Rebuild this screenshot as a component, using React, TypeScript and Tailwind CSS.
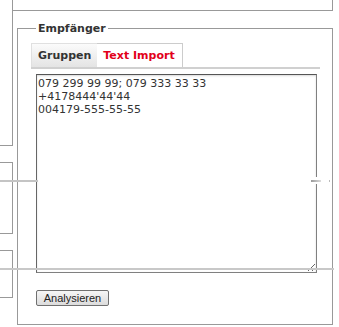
import React from "react";

export default function App() {
  return (
    <div className="relative w-[339px] h-[327px] bg-white overflow-hidden flex font-['DejaVu_Sans',sans-serif]">
      <div className="flex flex-col w-[13px] shrink-0">
        <div className="h-[146px] border-r border-b border-[#999]" />
        <div className="mt-[16px] h-[72px] border-y border-r border-[#999]" />
        <div className="mt-[16px] h-[48px] border-y border-r border-[#999]" />
      </div>
      <div className="flex flex-col w-[320px] shrink-0">
        <div className="h-[11px] border-r border-b border-[#999]" />
        <fieldset className="ml-[4px] w-[316px] mt-[11px] border border-[#999] pl-[13px] pr-[12px] pb-[15px]">
          <legend className="ml-[5px] px-[2px] text-[11px] leading-[13px] font-bold text-[#333]">
            Empfänger
          </legend>
          <div className="pt-[8px] flex flex-col">
            <div className="flex h-[26px] border-b-2 border-[#d0d0d0]">
              <div className="h-[24px] px-[6px] pt-[1px] flex items-center bg-gradient-to-b from-[#fbfbfb] to-[#e4e4e4] border-t border-l border-[#e0e0e0] text-[11px] font-bold text-[#333]">
                Gruppen
              </div>
              <div className="h-[24px] pl-[6px] pr-[7px] pt-[1px] flex items-center bg-white border-t border-r border-[#ccc] text-[11px] font-bold text-[#e2001a]">
                Text Import
              </div>
            </div>
            <textarea
              className="mt-[5px] ml-[5px] w-[281px] h-[199px] border border-[#808080] border-t-[#555] border-l-[#666] px-[1px] pt-[2px] pb-[1px] text-[11px] leading-[13px] text-[#333] font-['DejaVu_Sans',sans-serif] shadow-[inset_0_1px_2px_rgba(0,0,0,0.15)] outline-none"
              defaultValue={"079 299 99 99; 079 333 33 33\n+4178444'44'44\n004179-555-55-55"}
            />
            <div>
              <button className="mt-[17px] ml-[5px] w-[73px] h-[16px] border border-[#707070] rounded-[2px] bg-gradient-to-b from-[#f6f6f6] to-[#dcdcdc] text-[11px] leading-none text-[#222] font-['Liberation_Sans',Arial,sans-serif]">
                Analysieren
              </button>
            </div>
          </div>
        </fieldset>
      </div>
      <div className="absolute left-0 top-[180px] w-[38px] h-[2px] bg-[#c4c4c4]" />
      <div className="absolute left-[314px] top-[177px] w-[4px] h-[7px] bg-white" />
      <div className="absolute left-[311px] top-[180px] w-[10px] h-[2px] bg-gradient-to-r from-[#999] to-[#ddd]" />
      <div className="absolute left-[329px] top-[180px] w-[1px] h-[2px] bg-[#bbb]" />
      <div className="absolute left-0 top-[268px] w-[334px] h-[2px] bg-[#c8c8c8]" />
    </div>
  );
}
